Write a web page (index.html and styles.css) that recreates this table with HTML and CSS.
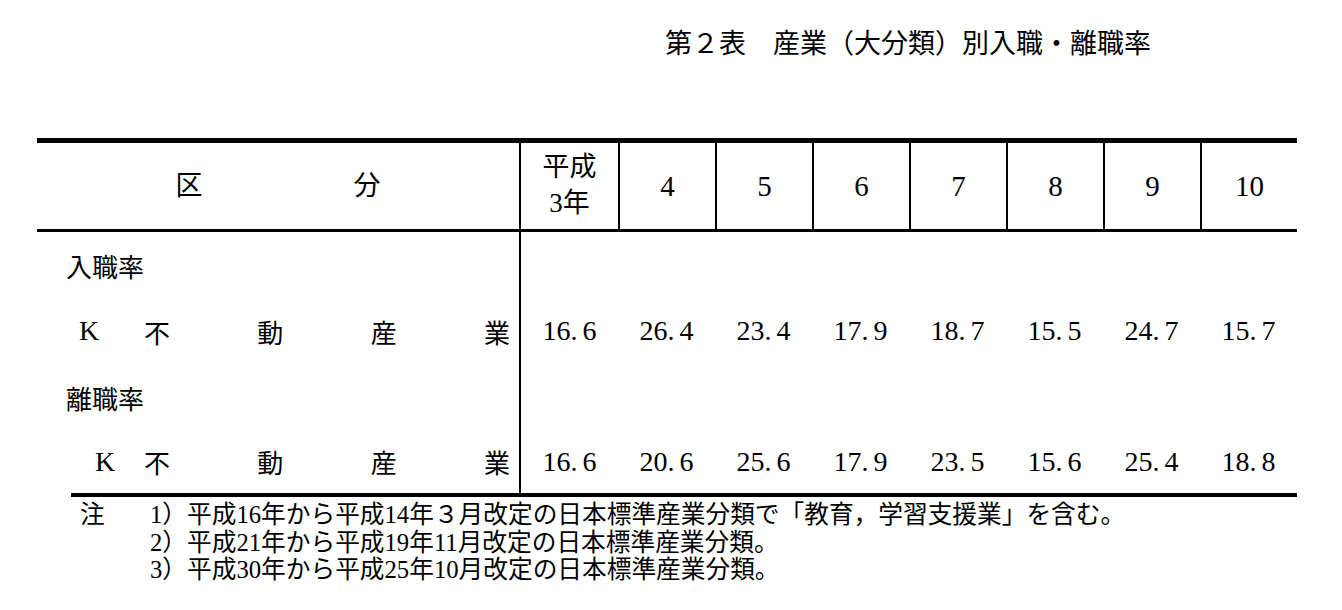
FILE: index.html
```html
<!DOCTYPE html>
<html lang="ja">
<head>
<meta charset="utf-8">
<title>第２表 産業（大分類）別入職・離職率</title>
<link rel="stylesheet" href="styles.css">
</head>
<body>
<div class="page">
  <h1 class="title">第２表　産業（大分類）別入職・離職率</h1>

  <div class="table">
    <div class="th th-label"><span>区</span><span>分</span></div>
    <div class="th th-year">平成<br>3年</div>
    <div class="th sep">4</div>
    <div class="th sep">5</div>
    <div class="th sep">6</div>
    <div class="th sep">7</div>
    <div class="th sep">8</div>
    <div class="th sep">9</div>
    <div class="th sep">10</div>

    <div class="cell label sec">入職率</div>
    <div class="cell"></div><div class="cell"></div><div class="cell"></div><div class="cell"></div>
    <div class="cell"></div><div class="cell"></div><div class="cell"></div><div class="cell"></div>

    <div class="cell label ind"><span class="k">K</span><span class="words"><span>不</span><span>動</span><span>産</span><span>業</span></span></div>
    <div class="cell">16<span class="pt">.</span>6</div>
    <div class="cell">26<span class="pt">.</span>4</div>
    <div class="cell">23<span class="pt">.</span>4</div>
    <div class="cell">17<span class="pt">.</span>9</div>
    <div class="cell">18<span class="pt">.</span>7</div>
    <div class="cell">15<span class="pt">.</span>5</div>
    <div class="cell">24<span class="pt">.</span>7</div>
    <div class="cell">15<span class="pt">.</span>7</div>

    <div class="cell label sec">離職率</div>
    <div class="cell"></div><div class="cell"></div><div class="cell"></div><div class="cell"></div>
    <div class="cell"></div><div class="cell"></div><div class="cell"></div><div class="cell"></div>

    <div class="cell label ind last"><span class="k k2">K</span><span class="words"><span>不</span><span>動</span><span>産</span><span>業</span></span></div>
    <div class="cell last">16<span class="pt">.</span>6</div>
    <div class="cell last">20<span class="pt">.</span>6</div>
    <div class="cell last">25<span class="pt">.</span>6</div>
    <div class="cell last">17<span class="pt">.</span>9</div>
    <div class="cell last">23<span class="pt">.</span>5</div>
    <div class="cell last">15<span class="pt">.</span>6</div>
    <div class="cell last">25<span class="pt">.</span>4</div>
    <div class="cell last">18<span class="pt">.</span>8</div>
  </div>
  <div class="rule"></div>

  <div class="notes">
    <span>注</span><span>1）</span><span>平成16年から平成14年３月改定の日本標準産業分類で「教育，学習支援業」を含む。</span>
    <span></span><span>2）</span><span>平成21年から平成19年11月改定の日本標準産業分類。</span>
    <span></span><span>3）</span><span>平成30年から平成25年10月改定の日本標準産業分類。</span>
  </div>
</div>
</body>
</html>
```

FILE: styles.css
```css
body {
  margin: 0;
  background: #fff;
  color: #000;
  font-family: "Liberation Serif", "Noto Sans CJK JP", serif;
}

.page {
  padding-top: 31px;
}

.title {
  margin: 0 0 0 665px;
  font-size: 27px;
  line-height: 27px;
  font-weight: normal;
  white-space: nowrap;
}

.table {
  margin: 80px 0 0 37px;
  width: 1260px;
  display: grid;
  grid-template-columns: 484px repeat(8, 97px);
  border-top: 5px solid #000;
}

.th {
  height: 89px;
  box-sizing: border-box;
  border-bottom: 3px solid #000;
  display: flex;
  align-items: center;
  justify-content: center;
  text-align: center;
  font-size: 29px;
  line-height: 36px;
}

.th-label {
  border-right: 2px solid #000;
  gap: 151px;
  font-size: 27px;
}

.th-year {
  font-size: 27px;
  line-height: 36px;
  padding-bottom: 2px;
}

.sep {
  border-left: 2px solid #000;
}

.cell {
  height: 66px;
  box-sizing: border-box;
  display: flex;
  align-items: center;
  justify-content: center;
  font-size: 28px;
  white-space: nowrap;
}

.cell.last {
  height: 63px;
}

.label {
  border-right: 2px solid #000;
  justify-content: flex-start;
  font-size: 26px;
}

.sec {
  padding-left: 29px;
}

.ind {
  padding-left: 42px;
  padding-right: 9px;
}

.k {
  width: 65px;
  flex: none;
  font-size: 28px;
  box-sizing: border-box;
}

.k2 {
  padding-left: 16px;
}

.words {
  flex: 1;
  display: flex;
  justify-content: space-between;
}

.pt {
  display: inline-block;
  width: 12px;
}

.rule {
  margin-left: 71px;
  width: 1226px;
  height: 4px;
  background: #000;
}

.notes {
  margin: 4px 0 0 80px;
  display: grid;
  grid-template-columns: 70px 37px auto;
  font-size: 24.7px;
  line-height: 27.5px;
  white-space: nowrap;
}
```
